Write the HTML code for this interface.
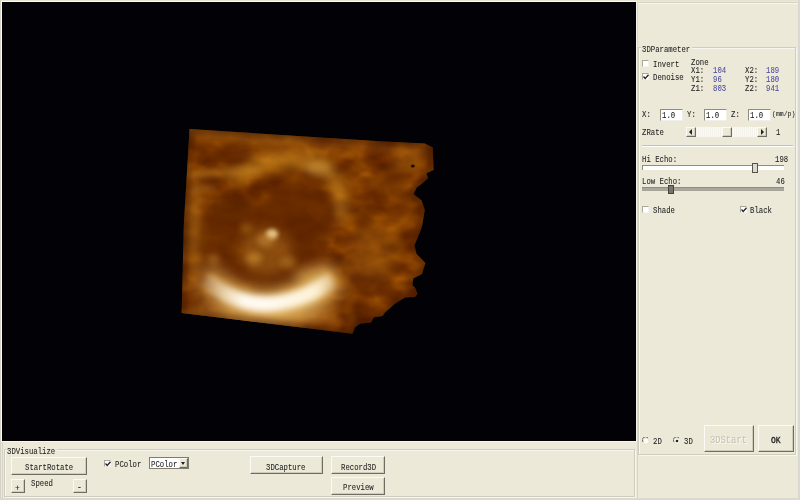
<!DOCTYPE html>
<html><head><meta charset="utf-8">
<style>
html,body{margin:0;padding:0;width:800px;height:500px;overflow:hidden;background:#ECE9D8;}
*{box-sizing:border-box;}
.a{position:absolute;}
.t{position:absolute;font-family:"Liberation Mono",monospace;font-size:7.3px;line-height:8px;color:#222;white-space:pre;-webkit-text-stroke:0.06px currentColor;will-change:transform;transform:translateY(1px) scaleY(1.18);transform-origin:0 0;}
.btn{position:absolute;background:#ECE9D8;border-top:1px solid #fbfaf4;border-left:1px solid #fbfaf4;border-right:1px solid #6f6d62;border-bottom:1px solid #6f6d62;box-shadow:inset -1px -1px 0 #cfccbc;}
.chk{position:absolute;width:7px;height:7px;background:#fff;border-top:1px solid #a9a69a;border-left:1px solid #a9a69a;border-right:1px solid #f4f3ee;border-bottom:1px solid #f4f3ee;}
.gb{position:absolute;border:1px solid #cfcdbd;box-shadow:1px 1px 0 #f7f6ef, inset 1px 1px 0 #f7f6ef;}
.num{color:#4b4ba0;}
.inp{position:absolute;background:#fff;border-top:1px solid #8f8d80;border-left:1px solid #8f8d80;border-right:1px solid #f0efe8;border-bottom:1px solid #f0efe8;}
</style></head><body>
<!-- outer edges -->
<div class="a" style="left:0;top:0;width:800px;height:1px;background:#e6e3d2"></div>
<div class="a" style="left:0;top:1px;width:637px;height:1px;background:#fbfaf5"></div>
<div class="a" style="left:1px;top:1px;width:1px;height:441px;background:#fbfaf5"></div>
<div class="a" style="left:0;top:0;width:1px;height:500px;background:#d6d3c4"></div>

<div class="a" style="left:798px;top:0;width:2px;height:500px;background:#d9d9cf"></div>
<div class="a" style="left:0;top:498px;width:800px;height:2px;background:#d9d9cf"></div>
<div class="a" style="left:2px;top:441px;width:1px;height:57px;background:#d6d4c6"></div>
<div class="a" style="left:637px;top:2px;width:161px;height:1px;background:#d6d3c3"></div>
<div class="a" style="left:637px;top:3px;width:161px;height:1px;background:#f6f5ee"></div>
<!-- black view -->
<div class="a" id="view" style="left:2px;top:2px;width:634px;height:439px;background:#020206;overflow:hidden">
<svg width="634" height="439" viewBox="2 2 634 439">
<defs>
<clipPath id="vc"><path d="M189.5,129 L380,141.2 L424.8,143.6 L432.8,147.6 L433.6,170 L426.4,173.2 L428,178 L423.2,182.8 L416.8,187.6 L413.6,194 L421.6,200.4 L424.8,210 L422,226.6 L420,232 L414.4,245.4 L416.6,254 L425.4,263 L422,274 L413.3,278.4 L412.5,285 L415,287.5 L417.5,293.75 L415,297 L405,297.5 L395,303.75 L385,312.5 L382.5,316 L373.75,317.5 L371,322.5 L360,323.75 L355,327.5 L352.5,333.75 L181.6,313 L183.8,225 Z"/></clipPath>
<filter id="tx" x="170" y="120" width="270" height="220" filterUnits="userSpaceOnUse" color-interpolation-filters="sRGB">
<feTurbulence type="fractalNoise" baseFrequency="0.035 0.055" numOctaves="3" seed="11" result="n1"/>
<feColorMatrix in="n1" type="matrix" values="1.3 0 0 0 -0.15  1.3 0 0 0 -0.15  1.3 0 0 0 -0.15  0 0 0 0 1" result="g1"/>
<feComponentTransfer in="g1" result="c1">
<feFuncR type="table" tableValues="0.32 0.37 0.43 0.53 0.66"/>
<feFuncG type="table" tableValues="0.12 0.14 0.18 0.25 0.37"/>
<feFuncB type="table" tableValues="0.00 0.00 0.00 0.01 0.03"/>
</feComponentTransfer>
<feTurbulence type="turbulence" baseFrequency="0.02 0.035" numOctaves="1" seed="3" result="n2"/>
<feColorMatrix in="n2" type="matrix" values="0 0 0 0 0.70  0 0 0 0 0.40  0 0 0 0 0.02  -2.5 0 0 0 0.3" result="veins"/>
<feGaussianBlur in="veins" stdDeviation="2" result="vb"/>
<feComposite in="vb" in2="c1" operator="over"/>
<feGaussianBlur stdDeviation="0.8"/>
</filter>
<filter id="tx2" x="170" y="120" width="270" height="220" filterUnits="userSpaceOnUse" color-interpolation-filters="sRGB">
<feTurbulence type="turbulence" baseFrequency="0.03 0.05" numOctaves="3" seed="4" result="n"/>
<feColorMatrix in="n" type="matrix" values="1 0 0 0 0  1 0 0 0 0  1 0 0 0 0  0 0 0 0 1"/>
<feComponentTransfer>
<feFuncR type="linear" slope="1.8" intercept="-0.1"/>
<feFuncG type="linear" slope="1.8" intercept="-0.1"/>
<feFuncB type="linear" slope="1.8" intercept="-0.1"/>
</feComponentTransfer>
<feGaussianBlur stdDeviation="1"/>
</filter>
<filter id="b05" x="0" y="0" width="800" height="500" filterUnits="userSpaceOnUse"><feGaussianBlur stdDeviation="0.6"/></filter>
<filter id="b2" x="0" y="0" width="800" height="500" filterUnits="userSpaceOnUse"><feGaussianBlur stdDeviation="2"/></filter>
<filter id="b3" x="0" y="0" width="800" height="500" filterUnits="userSpaceOnUse"><feGaussianBlur stdDeviation="3"/></filter>
<filter id="b4" x="0" y="0" width="800" height="500" filterUnits="userSpaceOnUse"><feGaussianBlur stdDeviation="4"/></filter>
<filter id="b6" x="0" y="0" width="800" height="500" filterUnits="userSpaceOnUse"><feGaussianBlur stdDeviation="6"/></filter>
<filter id="b7" x="0" y="0" width="800" height="500" filterUnits="userSpaceOnUse"><feGaussianBlur stdDeviation="7"/></filter>
<filter id="b8" x="0" y="0" width="800" height="500" filterUnits="userSpaceOnUse"><feGaussianBlur stdDeviation="8"/></filter>
<linearGradient id="cg1" gradientUnits="userSpaceOnUse" x1="198" y1="0" x2="345" y2="0">
<stop offset="0" stop-color="#e0ac50" stop-opacity="0.25"/><stop offset="0.2" stop-color="#ecbc60" stop-opacity="0.7"/><stop offset="0.8" stop-color="#f0c870" stop-opacity="0.85"/><stop offset="1" stop-color="#e0ac50" stop-opacity="0.35"/></linearGradient>
<linearGradient id="cg2" gradientUnits="userSpaceOnUse" x1="200" y1="0" x2="336" y2="0">
<stop offset="0" stop-color="#fff4dc" stop-opacity="0.1"/><stop offset="0.2" stop-color="#fff4dc" stop-opacity="0.75"/><stop offset="0.32" stop-color="#fffaf0" stop-opacity="1"/><stop offset="0.5" stop-color="#fffaf0" stop-opacity="1"/><stop offset="0.85" stop-color="#fff4dc" stop-opacity="0.95"/><stop offset="1" stop-color="#fff4dc" stop-opacity="0.3"/></linearGradient>
</defs>
<g clip-path="url(#vc)">
<rect x="170" y="120" width="270" height="220" filter="url(#tx)"/>
<!-- top light strip -->
<path d="M185,134 L430,150" stroke="#b07020" stroke-width="8" opacity="0.3" filter="url(#b4)"/>
<!-- light band left of head -->
<ellipse cx="195" cy="228" rx="10" ry="45" fill="#c4821c" opacity="0.45" filter="url(#b6)"/>
<!-- top medium-light area -->
<ellipse cx="290" cy="152" rx="60" ry="10" fill="#bc7820" opacity="0.2" filter="url(#b6)"/>
<!-- light arc above head -->
<path d="M232,180 Q256,162 292,161 Q326,160 337,185 Q343,200 339,222" stroke="#d89a28" stroke-width="14" fill="none" opacity="0.5" filter="url(#b6)"/>
<path d="M188,176 Q230,170 262,170" stroke="#cc8c28" stroke-width="8" fill="none" opacity="0.45" filter="url(#b3)"/>
<ellipse cx="222" cy="155" rx="32" ry="8" fill="#642a00" opacity="0.4" filter="url(#b4)"/>
<path d="M190,190 Q205,186 215,190" stroke="#cc8c28" stroke-width="6" fill="none" opacity="0.4" filter="url(#b3)"/>
<path d="M192,133 L300,140" stroke="#c88420" stroke-width="6" fill="none" opacity="0.35" filter="url(#b3)"/>
<ellipse cx="318" cy="168" rx="14" ry="7" fill="#e0aa48" opacity="0.5" filter="url(#b4)"/>
<!-- dark head (heart) -->
<path d="M199,240 C199,210 212,193 228,192 C244,191 252,202 258,208 C266,190 285,178 300,180 C322,183 334,200 332,225 C330,255 318,278 280,288 C245,292 220,282 208,268 C201,258 199,250 199,240 Z" fill="#602800" opacity="0.72" filter="url(#b4)"/>
<ellipse cx="232" cy="210" rx="22" ry="13" fill="#5a2600" opacity="0.35" filter="url(#b4)"/>
<!-- lighter center -->
<ellipse cx="266" cy="252" rx="26" ry="24" fill="#b0701a" opacity="0.5" filter="url(#b6)"/>
<ellipse cx="272" cy="234" rx="6" ry="5" fill="#f2d494" opacity="0.9" filter="url(#b2)"/>
<ellipse cx="266" cy="240" rx="9" ry="7" fill="#d8a248" opacity="0.45" filter="url(#b3)"/>
<ellipse cx="254" cy="258" rx="8" ry="6" fill="#d49a38" opacity="0.55" filter="url(#b3)"/>
<ellipse cx="288" cy="262" rx="8" ry="6" fill="#cc8e30" opacity="0.45" filter="url(#b3)"/>
<ellipse cx="246" cy="228" rx="6" ry="5" fill="#c48628" opacity="0.4" filter="url(#b3)"/>
<ellipse cx="214" cy="259" rx="6" ry="5" fill="#cc8e30" opacity="0.4" filter="url(#b3)"/>
<!-- right patches -->
<ellipse cx="372" cy="255" rx="25" ry="28" fill="#ac6a14" opacity="0.3" filter="url(#b8)"/>
<ellipse cx="408" cy="160" rx="18" ry="12" fill="#bc7818" opacity="0.3" filter="url(#b6)"/>
<!-- below crescent -->
<ellipse cx="260" cy="316" rx="80" ry="12" fill="#c08030" opacity="0.5" filter="url(#b6)"/>
<!-- crescent -->
<ellipse cx="314" cy="276" rx="22" ry="11" fill="#e0aa50" opacity="0.45" filter="url(#b6)"/>
<path d="M198,270 C214,292 238,306 264,307 C292,307 316,294 340,276" stroke="url(#cg1)" stroke-width="34" fill="none" filter="url(#b7)"/>
<path d="M205,279 C220,294 244,304 266,304 C292,303 312,294 333,280" stroke="url(#cg2)" stroke-width="16" fill="none" filter="url(#b3)"/>
<path d="M189.5,129 L380,141.2 L424.8,143.6 L432.8,147.6 L433.6,170 L426.4,173.2 L428,178 L423.2,182.8 L416.8,187.6 L413.6,194 L421.6,200.4 L424.8,210 L422,226.6 L420,232 L414.4,245.4 L416.6,254 L425.4,263 L422,274 L413.3,278.4 L412.5,285 L415,287.5 L417.5,293.75 L415,297 L405,297.5 L395,303.75 L385,312.5 L382.5,316 L373.75,317.5 L371,322.5 L360,323.75 L355,327.5 L352.5,333.75 L181.6,313 L183.8,225 Z" fill="none" stroke="#2a1000" stroke-width="7" opacity="0.45" filter="url(#b3)"/>
<ellipse cx="412.8" cy="166" rx="2" ry="1.5" fill="#1a0a02" filter="url(#b05)"/>
<ellipse cx="366" cy="328" rx="2.2" ry="1.8" fill="#1a0a02" filter="url(#b05)"/>
</g>
</svg>
</div>

<!-- right panel -->
<div class="a" style="left:636px;top:2px;width:1px;height:440px;background:#f4f3ec"></div>
<div class="a" style="left:637px;top:2px;width:1px;height:498px;background:#d9d7c9"></div>
<div class="gb" style="left:638px;top:47px;width:158px;height:408px"></div>
<div class="a" style="left:641px;top:43px;width:51px;height:8px;background:#ECE9D8"></div>
<div class="t" style="left:642px;top:44px">3DParameter</div>

<div class="chk" style="left:642px;top:60px"></div>
<div class="t" style="left:653px;top:59px">Invert</div>
<div class="chk" style="left:642px;top:73px"></div>
<div class="t" style="left:653px;top:72px">Denoise</div>

<div class="t" style="left:691px;top:57px">Zone</div>
<div class="t" style="left:691px;top:64.5px">X1:</div>
<div class="t" style="left:691px;top:73.5px">Y1:</div>
<div class="t" style="left:691px;top:82.5px">Z1:</div>
<div class="t num" style="left:713px;top:64.5px">104</div>
<div class="t num" style="left:713px;top:73.5px">96</div>
<div class="t num" style="left:713px;top:82.5px">803</div>
<div class="t" style="left:745px;top:64.5px">X2:</div>
<div class="t" style="left:745px;top:73.5px">Y2:</div>
<div class="t" style="left:745px;top:82.5px">Z2:</div>
<div class="t num" style="left:766px;top:64.5px">189</div>
<div class="t num" style="left:766px;top:73.5px">180</div>
<div class="t num" style="left:766px;top:82.5px">941</div>

<div class="t" style="left:642px;top:109px">X:</div>
<div class="t" style="left:687px;top:109px">Y:</div>
<div class="t" style="left:731px;top:109px">Z:</div>

<div class="t" style="left:642px;top:127px">ZRate</div>

<div class="a" style="left:642px;top:145px;width:151px;height:1px;background:#c5c2b2"></div>
<div class="a" style="left:642px;top:146px;width:151px;height:1px;background:#fff"></div>

<div class="t" style="left:642px;top:154px">Hi Echo:</div>
<div class="t" style="left:775px;top:154px">198</div>
<div class="t" style="left:642px;top:176px">Low Echo:</div>
<div class="t" style="left:776px;top:176px">46</div>

<div class="chk" style="left:642px;top:206px"></div>
<div class="t" style="left:653px;top:205px">Shade</div>
<div class="chk" style="left:740px;top:206px"></div>
<div class="t" style="left:750px;top:205px">Black</div>

<div class="t" style="left:653px;top:436px">2D</div>
<div class="t" style="left:684px;top:436px">3D</div>

<div class="btn" style="left:704px;top:425px;width:50px;height:27px"></div>
<div class="btn" style="left:758px;top:425px;width:36px;height:27px"></div>

<!-- bottom panel -->
<div class="gb" style="left:4px;top:449px;width:631px;height:48px"></div>
<div class="a" style="left:2px;top:441px;width:635px;height:1px;background:#f7f6ef"></div>
<div class="a" style="left:6px;top:446px;width:51px;height:8px;background:#ECE9D8"></div>
<div class="t" style="left:7px;top:446px">3DVisualize</div>

<div class="btn" style="left:11px;top:457px;width:76px;height:18px"></div>
<div class="t" style="left:25px;top:462px">StartRotate</div>
<div class="btn" style="left:11px;top:479px;width:14px;height:14px"></div>
<div class="t" style="left:31px;top:478px">Speed</div>
<div class="btn" style="left:73px;top:479px;width:14px;height:14px"></div>

<div class="chk" style="left:104px;top:460px"></div>
<div class="t" style="left:115px;top:459px">PColor</div>

<div class="btn" style="left:250px;top:456px;width:73px;height:18px"></div>
<div class="t" style="left:266px;top:462px">3DCapture</div>
<div class="btn" style="left:331px;top:456px;width:54px;height:18px"></div>
<div class="t" style="left:341px;top:462px">Record3D</div>
<div class="btn" style="left:331px;top:477px;width:54px;height:18px"></div>
<div class="t" style="left:343px;top:482px">Preview</div>


<!-- inputs -->
<div class="inp" style="left:660px;top:109px;width:23px;height:12px"></div>
<div class="t" style="left:662px;top:110px">1.0</div>
<div class="inp" style="left:704px;top:109px;width:23px;height:12px"></div>
<div class="t" style="left:706px;top:110px">1.0</div>
<div class="inp" style="left:748px;top:109px;width:23px;height:12px"></div>
<div class="t" style="left:750px;top:110px">1.0</div>
<div class="t" style="left:772px;top:109px;font-size:6.5px">(mm/p)</div>

<!-- scrollbar -->
<div class="a" style="left:696px;top:127px;width:62px;height:10px;background:repeating-linear-gradient(90deg,#f4f2ea 0 1px,#fbfaf6 1px 2px)"></div>
<div class="btn" style="left:686px;top:127px;width:10px;height:10px"></div>
<div class="a" style="left:689px;top:129px;width:0;height:0;border-top:3px solid transparent;border-bottom:3px solid transparent;border-right:3px solid #222"></div>
<div class="btn" style="left:757px;top:127px;width:10px;height:10px"></div>
<div class="a" style="left:761px;top:129px;width:0;height:0;border-top:3px solid transparent;border-bottom:3px solid transparent;border-left:3px solid #222"></div>
<div class="btn" style="left:722px;top:127px;width:10px;height:10px"></div>
<div class="t" style="left:776px;top:127px">1</div>

<!-- hi echo slider -->
<div class="a" style="left:642px;top:165px;width:142px;height:5px;background:#fff;border-top:1px solid #8f8d80;border-left:1px solid #8f8d80"></div>
<div class="a" style="left:752px;top:163px;width:6px;height:10px;background:#dcdad0;border:1px solid #55544c"></div>
<!-- low echo slider -->
<div class="a" style="left:642px;top:187px;width:142px;height:4px;background:#a9a79c;border-top:1px solid #8f8d80"></div>
<div class="a" style="left:668px;top:185px;width:6px;height:9px;background:#77756b;border:1px solid #45443e"></div>

<!-- checkmarks -->
<svg class="a" style="left:643px;top:74px" width="6" height="6"><path d="M0.5,2.5 L2.2,4.5 L5.5,0.8" stroke="#222" stroke-width="1.3" fill="none"/></svg>
<svg class="a" style="left:741px;top:207px" width="6" height="6"><path d="M0.5,2.5 L2.2,4.5 L5.5,0.8" stroke="#222" stroke-width="1.3" fill="none"/></svg>
<svg class="a" style="left:105px;top:461px" width="6" height="6"><path d="M0.5,2.5 L2.2,4.5 L5.5,0.8" stroke="#222" stroke-width="1.3" fill="none"/></svg>

<!-- radios -->
<svg class="a" style="left:642px;top:437px" width="8" height="8"><circle cx="4" cy="4" r="3.2" fill="#fbfaf6" stroke="#e4e1d4" stroke-width="1"/><path d="M1,5 A3.2,3.2 0 0 1 6,1" stroke="#6a685e" stroke-width="1" fill="none"/></svg>
<svg class="a" style="left:673px;top:437px" width="8" height="8"><circle cx="4" cy="4" r="3.2" fill="#fbfaf6" stroke="#e4e1d4" stroke-width="1"/><path d="M1,5 A3.2,3.2 0 0 1 6,1" stroke="#6a685e" stroke-width="1" fill="none"/><circle cx="4" cy="4" r="1.3" fill="#222"/></svg>

<!-- button labels -->
<div class="t" style="left:710px;top:434px;font-size:8.8px;line-height:10px;color:#c5c2b4;text-shadow:1px 1px 0 #fbfaf4">3DStart</div>
<div class="t" style="left:771px;top:434px;font-size:8px;line-height:10px;color:#222;-webkit-text-stroke:0.3px #222">OK</div>
<div class="t" style="left:15px;top:483px;font-size:8px">+</div>
<div class="t" style="left:77px;top:482px;font-size:8px">-</div>

<!-- combo -->
<div class="a" style="left:149px;top:457px;width:40px;height:12px;background:#fff;border:1px solid #7f7d72"></div>
<div class="t" style="left:151px;top:459px">PColor</div>
<div class="btn" style="left:179px;top:458px;width:9px;height:10px"></div>
<div class="a" style="left:181px;top:462px;width:0;height:0;border-left:2.5px solid transparent;border-right:2.5px solid transparent;border-top:3px solid #222"></div>
</body></html>
